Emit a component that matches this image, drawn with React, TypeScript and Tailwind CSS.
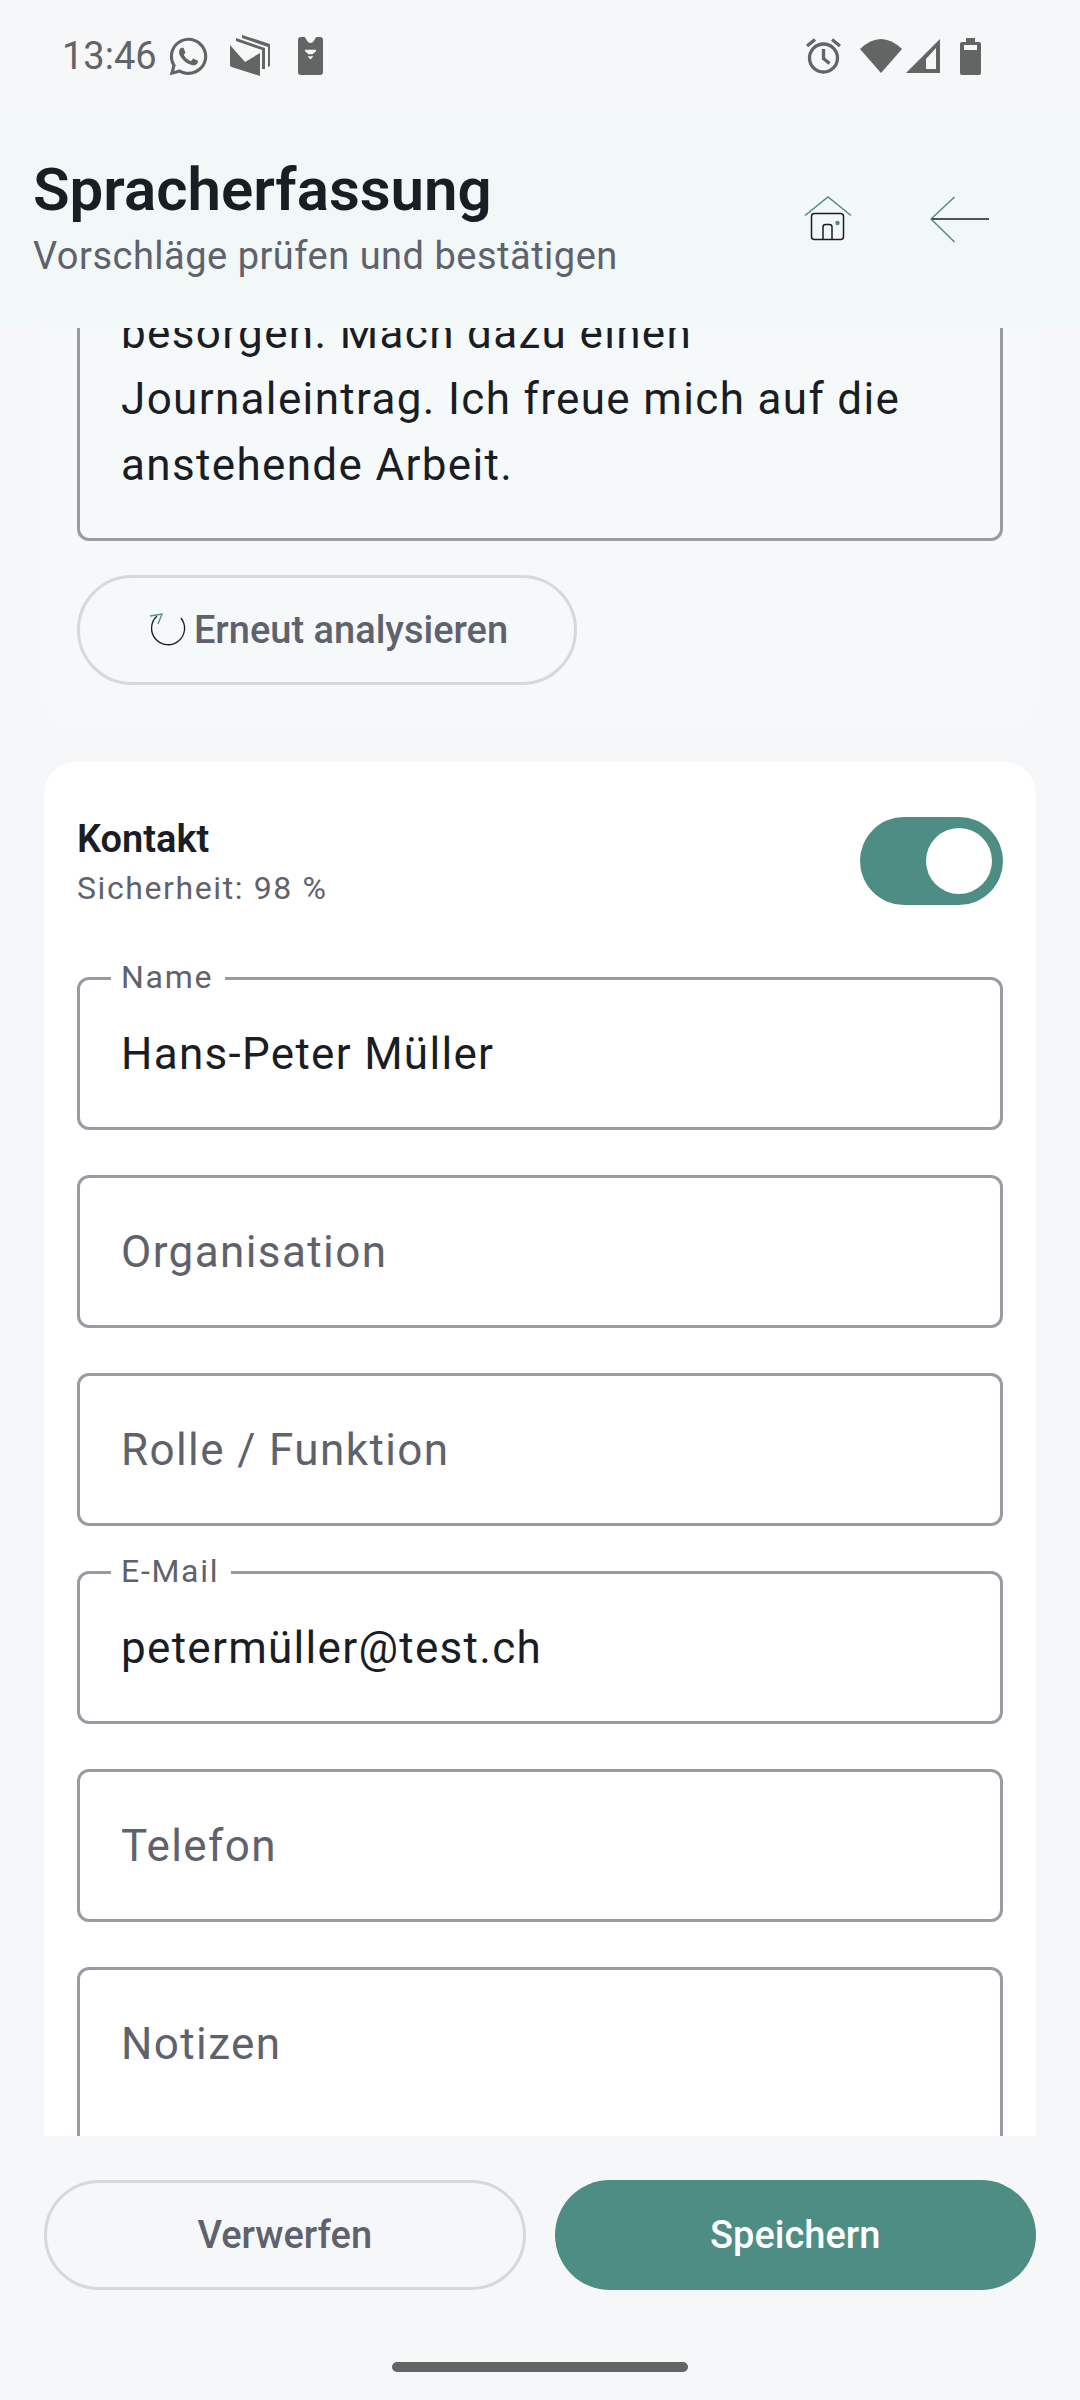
import { FaWhatsapp } from "react-icons/fa";

const FONT = "font-['Roboto',sans-serif]";

function StatusLeft() {
  return (
    <div className="flex items-center">
      <span className="text-[38px] leading-none text-[#636564]">13:46</span>
      <FaWhatsapp className="ml-[10px] h-[43px] w-[43px] text-[#636564]" />
      <svg className="ml-[20px] h-[42px] w-[40px]" viewBox="0 0 40 42" fill="#636564">
        <path d="M0 10l15 17 15-9v23L1.500 32Q0 31.500 0 30z" />
        <path d="M6 3l29 10v21h-3V15L6 6z" />
        <path d="M12 0l28 9v22l-2 1V12L12 3z" />
      </svg>
      <svg className="ml-[28px] h-[38px] w-[25px]" viewBox="0 0 25 38" fill="#636564">
        <path d="M3 0h3q1.500 0 2 2l2 3q2.500 2 5 0l2-3q.5-2 2-2h3q3 0 3 3v32q0 3-3 3H3q-3 0-3-3V3q0-3 3-3z" />
        <path d="M7 12.700h11v1.500l-3.500 3h-4L7 14.200zM9.500 19.300h6L12.500 22.500z" fill="#f6f7f9" />
      </svg>
    </div>
  );
}

function StatusRight() {
  return (
    <div className="flex items-center">
      <svg className="h-[36px] w-[35px]" viewBox="0 0 35 36" fill="none" stroke="#636564" strokeWidth="3.300">
        <circle cx="17.500" cy="20" r="14" />
        <path d="M17.500 11v9.500l6 5" />
        <path d="M1 8l8-6.500M34 8l-8-6.500" />
      </svg>
      <svg className="ml-[19px] h-[35px] w-[42px]" viewBox="0 0 42 35" fill="#636564">
        <path d="M0 10Q21-10 42 10L21 34z" />
      </svg>
      <svg className="ml-[4px] h-[35px] w-[34px]" viewBox="0 0 34 35" fill="#636564">
        <path fillRule="evenodd" d="M34 0V34H0zM20 20L30 9V30H20z" />
      </svg>
      <svg className="ml-[20px] h-[37px] w-[21px]" viewBox="0 0 21 37" fill="#636564">
        <path fillRule="evenodd" d="M6 0h9v4h4q2 0 2 2v29q0 2-2 2H2q-2 0-2-2V6q0-2 2-2h4zM4 7v5h13V7z" />
      </svg>
    </div>
  );
}

function HomeIcon() {
  return (
    <svg className="h-[46px] w-[48px]" viewBox="0 0 48 46" fill="none" strokeWidth="1.500">
      <path d="M1 19.500L24 1l23 18.500" stroke="#4e8d83" />
      <rect x="7.500" y="17.500" width="32" height="26" rx="3" stroke="#1a1d24" />
      <path d="M19 43.500V31q0-2.500 2.500-2.500h4q2.500 0 2.500 2.500v12.500" stroke="#1a1d24" />
      <circle cx="33.500" cy="27" r="2.200" fill="#4e8d83" />
    </svg>
  );
}

function BackIcon() {
  return (
    <svg className="h-[48px] w-[60px]" viewBox="0 0 60 48" fill="none" strokeWidth="1.500">
      <path d="M24.500 1L1 23l23.500 23" stroke="#4e8d83" />
      <path d="M2 23h57" stroke="#1a1d24" />
    </svg>
  );
}

function RetryIcon() {
  return (
    <svg className="h-[34px] w-[36px]" viewBox="0 0 36 34" fill="none" strokeWidth="1.300">
      <path d="M7 3A16.500 16.500 0 1 0 31 5" stroke="#1a1d24" />
      <path d="M0 3l12-2-4 10" stroke="#4e8d83" />
    </svg>
  );
}

function Field({
  label,
  value,
  placeholder,
  tall,
}: {
  label?: string;
  value?: string;
  placeholder?: string;
  tall?: boolean;
}) {
  return (
    <div
      className={
        tall
          ? "relative flex h-[260px] items-start rounded-[12px] border-[3px] border-[#9a9aa3] px-[41px] pt-[48px]"
          : "relative flex h-[153px] items-center rounded-[12px] border-[3px] border-[#9a9aa3] px-[41px]"
      }
    >
      {label && (
        <span className="absolute -top-[23px] left-[31px] bg-white pr-[12px] pl-[10px] text-[32px] leading-[40px] tracking-[1.700px] text-[#5f626c]">
          {label}
        </span>
      )}
      {value ? (
        <span className="text-[44px] leading-[52px] tracking-[1.300px] text-[#1a1d24]">{value}</span>
      ) : (
        <span className="text-[44px] leading-[52px] tracking-[1.400px] text-[#5f626c]">{placeholder}</span>
      )}
    </div>
  );
}

export default function App() {
  return (
    <div className={`flex h-[2400px] w-[1080px] flex-col overflow-hidden bg-[#f6f7f9] ${FONT}`}>
      <div className="flex h-[112px] shrink-0 items-center justify-between pr-[99px] pl-[62px]">
        <StatusLeft />
        <StatusRight />
      </div>

      <header className="z-10 -mt-[4px] flex h-[220px] shrink-0 items-start justify-between bg-[#f2f7f7] pt-[47px] pr-[90px] pl-[33px]">
        <div>
          <h1 className="text-[60px] leading-[70px] font-semibold text-[#1a1d24]">Spracherfassung</h1>
          <p className="mt-[8px] text-[38px] leading-[46px] tracking-[0.500px] text-[#5f626c]">
            Vorschläge prüfen und bestätigen
          </p>
        </div>
        <div className="mt-[41px] flex items-start gap-[78px]">
          <HomeIcon />
          <BackIcon />
        </div>
      </header>

      <main className="min-h-0 flex-1 overflow-hidden px-[44px]">
        {/* the list is scrolled, so the first card starts above the header */}
        <section className="-mt-[105px] rounded-[32px] bg-[#f5f9fa] px-[33px] pt-[34px] pb-[43px]">
          <div className="rounded-[12px] border-[3px] border-[#9a9aa3] px-[41px] pt-[40px] pb-[40px] text-[44px] leading-[66px] tracking-[1.350px] text-[#1a1d24]">
            <p>besorgen. Mach dazu einen</p>
            <p>Journaleintrag. Ich freue mich auf die</p>
            <p>anstehende Arbeit.</p>
          </div>
          <button
            type="button"
            className="mt-[34px] flex h-[110px] w-[500px] items-center justify-center gap-[8px] rounded-full border-[3px] border-[#d7d8db] pl-[4px] text-[38px] font-medium text-[#5f626c]"
          >
            <RetryIcon />
            Erneut analysieren
          </button>
        </section>

        <section className="mt-[34px] rounded-t-[32px] bg-white px-[33px] pt-[55px]">
          <div className="flex items-start justify-between">
            <div>
              <h2 className="text-[38px] leading-[44px] font-semibold text-[#1a1d24]">Kontakt</h2>
              <p className="mt-[7px] text-[32px] leading-[40px] tracking-[1.600px] text-[#5f626c]">Sicherheit: 98 %</p>
            </div>
            <div className="flex h-[88px] w-[143px] items-center justify-end rounded-full bg-[#4e8d83] pr-[11px]">
              <div className="h-[66px] w-[66px] rounded-full bg-white" />
            </div>
          </div>

          <div className="mt-[69px] flex flex-col gap-[45px]">
            <Field label="Name" value="Hans-Peter Müller" />
            <Field placeholder="Organisation" />
            <Field placeholder="Rolle / Funktion" />
            <Field label="E-Mail" value="petermüller@test.ch" />
            <Field placeholder="Telefon" />
            <Field placeholder="Notizen" tall />
          </div>
        </section>
      </main>

      <footer className="flex h-[264px] shrink-0 flex-col px-[44px] pt-[44px]">
        <div className="grid grid-cols-2 gap-[29px]">
          <button
            type="button"
            className="h-[110px] rounded-full border-[3px] border-[#d7d8db] text-[38px] font-medium text-[#5f626c]"
          >
            Verwerfen
          </button>
          <button type="button" className="h-[110px] rounded-full bg-[#4e8d83] text-[38px] font-medium text-white">
            Speichern
          </button>
        </div>
        <div className="mx-auto mt-[72px] h-[10px] w-[296px] rounded-full bg-[#636564]" />
      </footer>
    </div>
  );
}
